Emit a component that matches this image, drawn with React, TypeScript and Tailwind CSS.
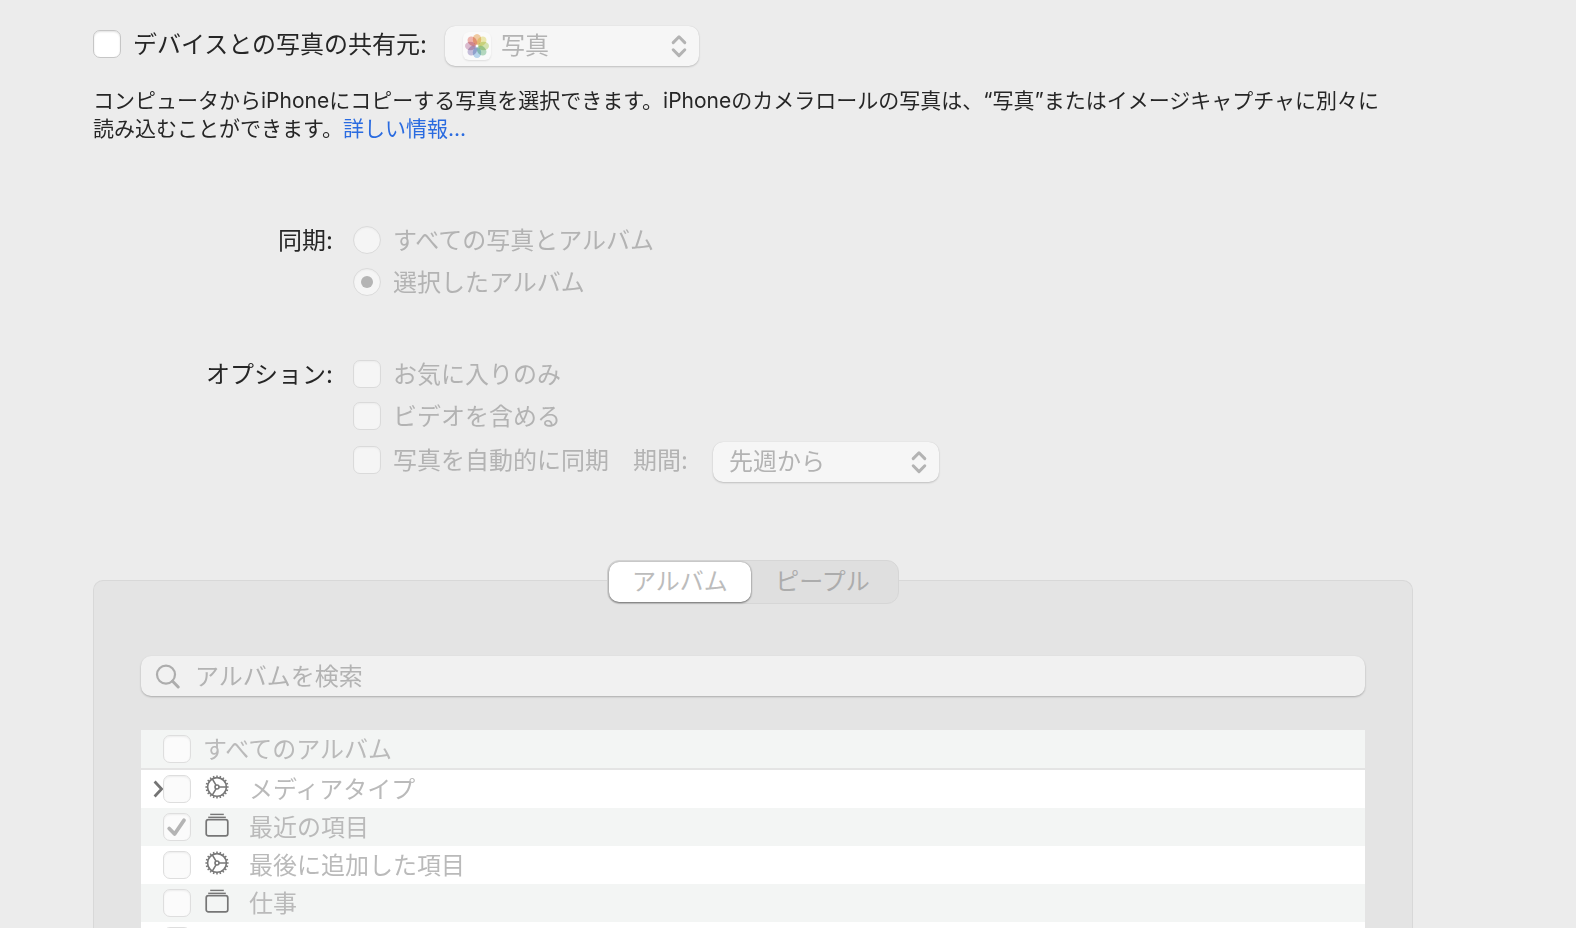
import React from 'react';

const FLOWER = [
  { angle: 0, color: '#f3c795' },
  { angle: 45, color: '#eee9a4' },
  { angle: 90, color: '#d2e3a6' },
  { angle: 135, color: '#abd6b8' },
  { angle: 180, color: '#afd2ee' },
  { angle: 225, color: '#bfb6d8' },
  { angle: 270, color: '#dab4cb' },
  { angle: 315, color: '#f0aba3' },
];

function PhotosIcon() {
  return (
    <svg viewBox="0 0 28 28" className="h-7 w-7 rounded-md bg-[#fafafa] shadow-[0_1px_2px_rgba(0,0,0,0.1)]" aria-hidden="true">
      {FLOWER.map((p) => (
        <ellipse
          key={p.angle}
          cx="14"
          cy="7.4"
          rx="4.2"
          ry="5.4"
          fill={p.color}
          transform={`rotate(${p.angle} 14 14)`}
          style={{ mixBlendMode: 'multiply' }}
          opacity="0.85"
        />
      ))}
      <circle cx="14" cy="14" r="1" fill="#fff" />
    </svg>
  );
}

function UpDown() {
  return (
    <svg
      viewBox="0 0 16 24"
      className="pointer-events-none absolute top-2 right-3 h-6 w-4"
      fill="none"
      stroke="#b3b3b3"
      strokeWidth="3"
      strokeLinecap="round"
      strokeLinejoin="round"
      aria-hidden="true"
    >
      <path d="M2.2 8.6 8 2.8l5.8 5.8M2.2 15.8 8 21.6l5.8-5.8" />
    </svg>
  );
}

function GearIcon() {
  const teeth = Array.from({ length: 20 }, (_, i) => i * 18);
  return (
    <svg viewBox="0 0 24 24" className="h-6 w-6" fill="none" stroke="#787878" strokeWidth="1.6" aria-hidden="true">
      <circle cx="12" cy="12" r="9.4" />
      <circle cx="12" cy="12" r="2" />
      <path d="M14 12h7.4M11 10.2 7.3 3.9M11 13.8l-3.7 6.3" />
      {teeth.map((a) => (
        <path key={a} d="M12 2.6V.4" strokeWidth="1.5" transform={`rotate(${a} 12 12)`} />
      ))}
    </svg>
  );
}

function AlbumIcon() {
  return (
    <svg viewBox="0 0 24 24" className="h-6 w-6" fill="none" stroke="#767676" aria-hidden="true">
      <rect x="1.2" y="6.7" width="21.6" height="16.2" rx="2.2" strokeWidth="1.7" />
      <path d="M3.2 4.3h17.6" strokeWidth="1.4" />
      <path d="M5.2 1.4h13.6" strokeWidth="1.4" />
    </svg>
  );
}

type CheckProps = { id: string; checked?: boolean; disabled?: boolean; white?: boolean };

function Check({ id, checked = false, disabled = true, white = false }: CheckProps) {
  return (
    <span className="grid h-7 w-7 shrink-0">
      <input
        id={id}
        type="checkbox"
        defaultChecked={checked}
        disabled={disabled}
        className={
          'col-start-1 row-start-1 h-7 w-7 appearance-none rounded-[7px] border ' +
          (!disabled
            ? 'border-[#c6c6c6] bg-white shadow-[inset_0_1px_2px_rgba(0,0,0,0.12)]'
            : white
              ? 'border-[#dedede] bg-[#fbfbfb] shadow-[inset_0_1px_2px_rgba(0,0,0,0.06)]'
              : 'border-[#dadada] bg-[#f5f5f5] shadow-[inset_0_1px_2px_rgba(0,0,0,0.04)]')
        }
      />
      {checked && (
        <svg
          viewBox="0 0 28 28"
          className="pointer-events-none col-start-1 row-start-1 h-7 w-7"
          fill="none"
          stroke="#b4b4b4"
          strokeWidth="3.8"
          strokeLinecap="round"
          strokeLinejoin="round"
          aria-hidden="true"
        >
          <path d="m6.2 15.5 5.4 5.5L21 7.2" />
        </svg>
      )}
    </span>
  );
}

function Radio({ id, checked = false }: { id: string; checked?: boolean }) {
  return (
    <span className="grid h-7 w-7 shrink-0 place-items-center">
      <input
        id={id}
        type="radio"
        name="sync"
        defaultChecked={checked}
        disabled
        className="col-start-1 row-start-1 h-7 w-7 appearance-none rounded-full border border-[#dadada] bg-[#f5f5f5] shadow-[inset_0_1px_2px_rgba(0,0,0,0.04)]"
      />
      {checked && <span className="pointer-events-none col-start-1 row-start-1 h-3 w-3 rounded-full bg-[#b4b4b4]" />}
    </span>
  );
}

const SELECT =
  'h-10 w-full appearance-none rounded-[10px] bg-[#f6f6f6] text-2xl leading-10 text-[#b3b3b3] shadow-[0_1px_2px_rgba(0,0,0,0.18),0_0_1px_rgba(0,0,0,0.12)]';

const ALBUMS = [
  { id: 'media', name: 'メディアタイプ', kind: 'smart', open: true },
  { id: 'recent', name: '最近の項目', kind: 'album', checked: true },
  { id: 'added', name: '最後に追加した項目', kind: 'smart' },
  { id: 'work', name: '仕事', kind: 'album' },
];

export default function App() {
  return (
    <main className="h-screen overflow-hidden bg-[#ececec] pt-[26px] pr-[163px] pl-[93px] font-['Inter','Noto_Sans_CJK_JP',sans-serif] text-2xl leading-[30px] text-[#262626]">
      <div className="flex h-10 items-start">
        <div className="flex gap-3 pt-1">
          <Check id="share" disabled={false} />
          <label htmlFor="share" className="whitespace-nowrap">
            デバイスとの写真の共有元:
          </label>
        </div>
        <div className="relative ml-[18px] w-[254px]">
          <select aria-label="共有元" disabled className={SELECT + ' pl-14'}>
            <option>写真</option>
          </select>
          <span className="pointer-events-none absolute top-1.5 left-[18px]">
            <PhotosIcon />
          </span>
          <UpDown />
        </div>
      </div>

      <p className="mt-[21px] text-[21px] leading-7">
        コンピュータからiPhoneにコピーする写真を選択できます。iPhoneのカメラロールの写真は、“写真”またはイメージキャプチャに別々に
        <br />
        読み込むことができます。
        <a href="#more" className="text-[#2a6be0]">
          詳しい情報...
        </a>
      </p>

      <div className="mt-[83px] grid grid-cols-[240px_1fr] gap-x-5 gap-y-16">
        <div className="h-7 text-right" id="sync-label">
          同期:
        </div>
        <div role="radiogroup" aria-labelledby="sync-label" className="flex flex-col gap-3.5 text-[#b3b3b3]">
          <div className="flex h-7 gap-3">
            <Radio id="all" />
            <label htmlFor="all">すべての写真とアルバム</label>
          </div>
          <div className="flex h-7 gap-3">
            <Radio id="selected" checked />
            <label htmlFor="selected">選択したアルバム</label>
          </div>
        </div>

        <div className="h-7 text-right" id="option-label">
          オプション:
        </div>
        <div role="group" aria-labelledby="option-label" className="flex flex-col text-[#b3b3b3]">
          <div className="flex h-7 gap-3">
            <Check id="fav" />
            <label htmlFor="fav">お気に入りのみ</label>
          </div>
          <div className="mt-3.5 flex h-7 gap-3">
            <Check id="video" />
            <label htmlFor="video">ビデオを含める</label>
          </div>
          <div className="mt-3 flex h-10">
            <div className="flex gap-3 pt-1">
              <Check id="auto" />
              <label htmlFor="auto">写真を自動的に同期</label>
              <label htmlFor="period" className="ml-3">
                期間:
              </label>
            </div>
            <div className="relative ml-[25px] w-[226px]">
              <select id="period" disabled className={SELECT + ' pl-4'}>
                <option>先週から</option>
              </select>
              <UpDown />
            </div>
          </div>
        </div>
      </div>

      <div
        className="relative z-10 mx-auto mt-[78px] flex h-11 w-[292px] rounded-xl border border-[#d6d6d6] bg-[#dfdfdf] py-px pl-px"
        role="tablist"
      >
        <button
          role="tab"
          aria-selected="true"
          disabled
          className="h-10 w-[142px] rounded-[10px] bg-white text-[#bcbcbc] shadow-[0_1px_2px_rgba(0,0,0,0.45),0_0_2px_rgba(0,0,0,0.3)]"
        >
          アルバム
        </button>
        <button role="tab" aria-selected="false" disabled className="h-10 flex-1 pr-1 text-[#acacac]">
          ピープル
        </button>
      </div>

      <section className="-mt-6 rounded-t-[10px] border border-b-0 border-[#d8d8d8] bg-[#e4e4e4] px-[47px] pt-[75px]">
        <div className="flex h-10 items-center gap-3.5 rounded-[10px] bg-[#f1f1f1] pl-3.5 shadow-[0_1px_2px_rgba(0,0,0,0.25)]">
          <svg
            viewBox="0 0 26 26"
            className="h-[26px] w-[26px] shrink-0"
            fill="none"
            stroke="#adadad"
            strokeLinecap="round"
            aria-hidden="true"
          >
            <circle cx="11" cy="11.6" r="9" strokeWidth="2.2" />
            <path d="m17.6 18.2 5.6 5.8" strokeWidth="3" />
          </svg>
          <input
            type="search"
            disabled
            aria-label="アルバムを検索"
            placeholder="アルバムを検索"
            className="h-10 min-w-0 flex-1 bg-transparent placeholder:text-[#b3b3b3]"
          />
        </div>

        <div className="mt-[34px] text-[#bababa]">
          <div className="flex h-[38px] items-center gap-3 bg-[#f3f5f4] pl-[22px]">
            <Check id="every" white />
            <label htmlFor="every" className="pt-0.5">
              すべてのアルバム
            </label>
          </div>
          <ul className="mt-0.5 bg-white">
            {ALBUMS.map((a) => (
              <li key={a.id} className="flex h-[38px] items-center even:bg-[#f3f5f4]">
                <span className="flex w-[22px] justify-end">
                  {a.open && (
                    <button aria-label="展開" className="flex">
                      <svg
                        viewBox="0 0 10 18"
                        className="h-[18px] w-2.5"
                        fill="none"
                        stroke="#747474"
                        strokeWidth="2.8"
                        aria-hidden="true"
                      >
                        <path d="m1.6 1.5 7 7.5-7 7.5" />
                      </svg>
                    </button>
                  )}
                </span>
                <Check id={a.id} checked={a.checked} white />
                <span className="ml-3.5 pb-1">{a.kind === 'smart' ? <GearIcon /> : <AlbumIcon />}</span>
                <label htmlFor={a.id} className="ml-5 pt-0.5">
                  {a.name}
                </label>
              </li>
            ))}
            <li className="flex h-[38px] items-center pl-[22px]">
              <Check id="next" white />
            </li>
          </ul>
        </div>
      </section>
    </main>
  );
}
